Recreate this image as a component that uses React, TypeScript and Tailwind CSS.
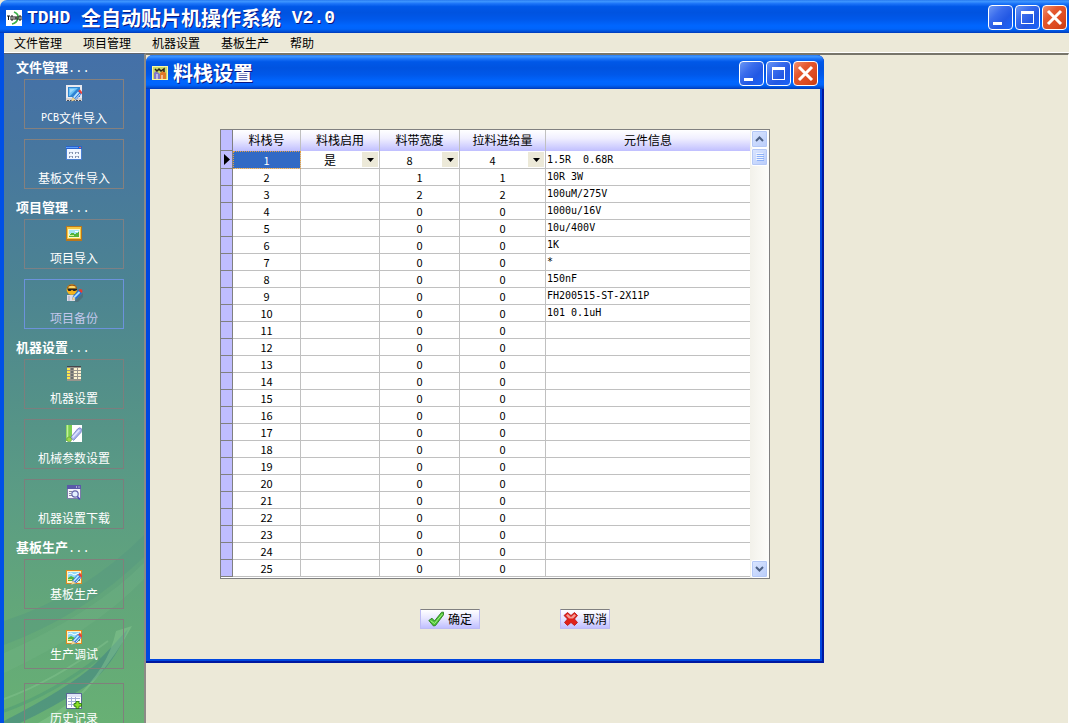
import { useState } from "react"
import type { ReactNode } from "react"
import clsx from "clsx"

interface FeederRow {
  width: string
  feed: string
  info: string
}

interface NavItem {
  label: string
  latin?: string
  icon: ReactNode
  active?: boolean
}

interface NavGroup {
  title: string
  items: NavItem[]
  border: string
  compact?: boolean
}

const MENUS = ["文件管理", "项目管理", "机器设置", "基板生产", "帮助"]

const INFO = ["", "10R 3W", "100uM/275V", "1000u/16V", "10u/400V", "1K", "*", "150nF", "FH200515-ST-2X11P", "101 0.1uH"]

const ROWS: FeederRow[] = Array.from({ length: 24 }, (_, i) => ({
  width: i < 2 ? String(i + 1) : "0",
  feed: i < 2 ? String(i + 1) : "0",
  info: INFO[i + 1] ?? "",
}))

const MONO = "font-['Liberation_Mono',monospace]"
const SMALL_MONO = "font-['DejaVu_Sans_Mono',monospace] text-[10px]"
const CAPTION =
  "bg-[linear-gradient(to_bottom,#2a7cf0_0%,#3d95ff_5%,#1c74f8_11%,#0058e8_20%,#0053e0_38%,#0058ea_58%,#0066ff_78%,#0064fb_88%,#0050d8_95%,#0038b8_100%)]"

function Pencil() {
  return (
    <>
      <path d="M5.5 16 L6.5 11.5 L12 5.5 L15.5 9 L10.5 14.6 Z" fill="#2f74d8" />
      <path d="M7.8 12.6 L12.6 7.2" stroke="#b4e8ff" strokeWidth="1.8" />
      <path d="M9.6 14 L14.2 9" stroke="#ffffff" strokeWidth="0.9" />
      <path d="M5.2 16.4 L6.6 12 L9.8 14.8 Z" fill="#f6d58c" />
      <path d="M12.2 6 L14 4.4 L16 6.8 L16 8.4 L15.2 9 Z" fill="#e8413a" />
    </>
  )
}

const icon = {
  pcb: (
    <svg viewBox="0 0 16 17" className="h-[17px] w-4">
      <rect width="16" height="14" fill="#e9e9ef" />
      <rect x="2" y="2" width="12" height="10" fill="#2f86d2" />
      <path d="M3 3 H12 L4 11 H3 Z" fill="#6cc0f6" />
      <path d="M4 4 H9 L4 8 Z" fill="#9ad8fc" />
      <rect y="13" width="16" height="3" fill="#d6d3d3" />
      <path d="M1 15.5 H15" stroke="#4a4a50" strokeDasharray="2 1" />
      <Pencil />
    </svg>
  ),
  board: (
    <svg viewBox="0 0 16 14" className="h-[14px] w-4" shapeRendering="crispEdges">
      <rect width="16" height="14" fill="#4a7fd0" />
      <rect width="16" height="3" fill="#2a62cc" />
      <rect y="1" width="12" height="1" fill="#5ca0ff" />
      <rect x="13" y="1" width="2" height="1" fill="#ef6a50" />
      <rect x="1" y="3" width="14" height="10" fill="#f1f6ff" />
      <path d="M3 6.5 H7 M9 6.5 H13 M3 10.5 H7 M9 10.5 H13" stroke="#a9b4c8" />
      <path d="M3.5 6 V8 M6.5 6 V8 M9.5 6 V8 M12.5 6 V8 M3.5 10 V12 M6.5 10 V12 M9.5 10 V12 M12.5 10 V12" stroke="#8292b0" />
    </svg>
  ),
  picture: (
    <svg viewBox="0 0 16 15" className="h-[15px] w-4" shapeRendering="crispEdges">
      <rect width="16" height="15" fill="#b8761c" />
      <rect x="1" y="1" width="14" height="12" fill="#f5c842" />
      <rect x="2" y="3" width="12" height="9" fill="#fdf6c8" />
      <rect x="3" y="4" width="10" height="4" fill="#a4e4f4" />
      <path d="M3 9 L6 7 L9 8 L13 6 V11 H3 Z" fill="#54b33c" />
      <rect x="3" y="9" width="5" height="1" fill="#d6f08c" />
      <rect x="9" y="5" width="3" height="1" fill="#fff" />
    </svg>
  ),
  backup: (
    <svg viewBox="0 0 17 18" className="h-[18px] w-[17px]">
      <path d="M8 18 L17 9 V13 L12 18 Z" fill="#50606c" opacity=".55" />
      <path d="M1 11 H9 V17 H1 Z" fill="#dcdce8" />
      <path d="M3 12 V17" stroke="#a8a8c0" />
      <circle cx="5.8" cy="5.5" r="5.2" fill="#f9b41c" />
      <path d="M1 4 Q2 0 6 .5 Q10 0 11 4 Z" fill="#9c5410" />
      <path d="M2.5 2.5 Q6 1 9.5 2.5 V4 H2.5 Z" fill="#ffd968" />
      <path d="M1 4.5 H11 V6 L9 7 H7.5 L6 5.8 L4.5 7 H2.5 Z" fill="#202028" />
      <path d="M6 16 L7 12 L13 6 L16 9 L10 15 Z" fill="#2468d8" />
      <path d="M8 13.5 L13.6 8" stroke="#a5e0ff" strokeWidth="1.8" />
      <path d="M6 16.5 L7 12.6 L9.6 15 Z" fill="#ffd88c" />
      <path d="M12.5 6 L14 5 Q17 5 16.4 8 L15.4 9 Z" fill="#e83a2e" />
    </svg>
  ),
  grid: (
    <svg viewBox="0 0 14 15" className="h-[15px] w-[14px]" shapeRendering="crispEdges">
      <rect width="14" height="15" fill="#98948c" />
      <rect width="14" height="1" fill="#45454a" />
      <path d="M1.5 2 V14" stroke="#ffe84a" strokeWidth="3" strokeDasharray="2 1" />
      <path d="M5 2 V14" stroke="#6a6e70" strokeWidth="2" strokeDasharray="2 1" />
      <path d="M8.5 2 V14 M12 2 V14" stroke="#fdf3d0" strokeWidth="3" strokeDasharray="2 1" />
      <path d="M10.5 1 V15 M6.5 1 V15" stroke="#98948c" />
    </svg>
  ),
  param: (
    <svg viewBox="0 0 16 17" className="h-[17px] w-4">
      <rect width="16" height="17" fill="#fff" />
      <path d="M0 0 H6 V12 L3 16 H0 Z" fill="#7ccf50" />
      <path d="M1.5 0 V13" stroke="#c2f09c" strokeWidth="1.5" />
      <path d="M4.6 12.6 L11.5 4 Q13.5 2 15.3 3.5 Q16 5 15 7.4 L7.6 15.4 Z" fill="#a8b4ee" stroke="#6a74b8" strokeWidth=".7" />
      <path d="M6.6 12.4 L13.4 5" stroke="#dfe4ff" strokeWidth="1.6" />
      <circle cx="3.2" cy="14.4" r="2.4" fill="#9cd84c" stroke="#5c9a2c" strokeWidth=".6" />
    </svg>
  ),
  download: (
    <svg viewBox="0 0 14 16" className="h-4 w-[14px]">
      <rect width="14" height="14" fill="#7c7ca8" />
      <rect width="14" height="4" fill="#5a5aa8" />
      <path d="M9 2 H10 M11.5 2 H12.5" stroke="#fff" />
      <rect x="1" y="4" width="12" height="9" fill="#f4f4fa" />
      <path d="M2 6.5 H5 M2 8.5 H4 M2 10.5 H5" stroke="#8888a0" />
      <circle cx="8" cy="9" r="3.2" fill="#e4f0ff" stroke="#6464a8" strokeWidth="1.2" />
      <path d="M10.4 11.6 L12.8 14.6" stroke="#4c4cb8" strokeWidth="1.6" />
    </svg>
  ),
  edit: (
    <svg viewBox="0 0 16 15" className="h-[15px] w-4">
      <rect width="16" height="14" fill="#e08a20" />
      <rect x="1" y="1" width="14" height="12" fill="#fff4c0" />
      <rect x="2" y="2" width="12" height="6" fill="#8fd8f8" />
      <path d="M2 4 L5 3 L8 5 L13 3" stroke="#fff" fill="none" />
      <path d="M2 8 L5 6 L9 8 L14 6 V11 H2 Z" fill="#55b440" />
      <path d="M2 9.5 H6" stroke="#d4f080" />
      <g transform="translate(0 -1.6)">
        <Pencil />
      </g>
    </svg>
  ),
  history: (
    <svg viewBox="0 0 16 16" className="h-4 w-4">
      <rect width="16" height="16" fill="#5a6a96" />
      <rect x="1" y="1" width="14" height="14" fill="#fff" />
      <rect x="1" y="1" width="14" height="3" fill="#dfe4f6" />
      <path d="M2 5.5 H14 M2 8.5 H14 M2 11.5 H12 M5.5 4 V14 M9.5 4 V14" stroke="#a4b0d8" />
      <path d="M10 8.5 H13 V10.5 H15.5 V13.2 H13 V15.5 H10 V13.2 H8 V10.5 H10 Z" fill="#8ce028" stroke="#2c7a14" strokeWidth=".9" />
    </svg>
  ),
}

const GROUPS: NavGroup[] = [
  {
    title: "文件管理",
    border: "border-[#85807e]",
    items: [
      { latin: "PCB", label: "文件导入", icon: icon.pcb },
      { label: "基板文件导入", icon: icon.board },
    ],
  },
  {
    title: "项目管理",
    border: "border-[#7d8084]",
    items: [
      { label: "项目导入", icon: icon.picture },
      { label: "项目备份", icon: icon.backup, active: true },
    ],
  },
  {
    title: "机器设置",
    border: "border-[#7c7e7d]",
    items: [
      { label: "机器设置", icon: icon.grid },
      { label: "机械参数设置", icon: icon.param },
      { label: "机器设置下载", icon: icon.download },
    ],
  },
  {
    title: "基板生产",
    border: "border-[#80807c]",
    compact: true,
    items: [
      { label: "基板生产", icon: icon.edit },
      { label: "生产调试", icon: icon.edit },
      { label: "历史记录", icon: icon.history },
    ],
  },
]

function WindowButtons() {
  const base = "flex size-[25px] items-center justify-center rounded-[4px] border border-white"
  const blue = "bg-[linear-gradient(135deg,#6c98f4_0%,#3a6cec_35%,#2258e4_65%,#1a64fa_100%)]"
  return (
    <div className="flex gap-[2px]">
      <button aria-label="最小化" className={clsx(base, blue)}>
        <svg viewBox="0 0 23 23" className="size-[23px]" shapeRendering="crispEdges">
          <rect x="4" y="16" width="9" height="3" fill="#fff" />
        </svg>
      </button>
      <button aria-label="最大化" className={clsx(base, blue)}>
        <svg viewBox="0 0 23 23" className="size-[23px]" shapeRendering="crispEdges">
          <path d="M5 5 H18 V18 H5 Z M6 8 V17 H17 V8 Z" fill="#fff" fillRule="evenodd" />
        </svg>
      </button>
      <button aria-label="关闭" className={clsx(base, "bg-[linear-gradient(135deg,#f09070_0%,#e4582f_35%,#dc4a20_70%,#c83c10_100%)]")}>
        <svg viewBox="0 0 23 23" className="size-[23px]">
          <path d="M5 5 L18 18 M18 5 L5 18" stroke="#fff" strokeWidth="3" />
        </svg>
      </button>
    </div>
  )
}

function Sidebar() {
  return (
    <nav className="relative w-[142px] shrink-0 overflow-hidden border-t border-r-2 border-t-[#5d6470] border-r-[#8c8a86] bg-[linear-gradient(to_bottom,#4470a8_0%,#47769f_14%,#4c8392_34%,#549188_52%,#5b9c84_66%,#62a67a_82%,#68b074_100%)]">
      <svg viewBox="0 0 140 200" preserveAspectRatio="none" className="absolute bottom-0 left-0 h-[200px] w-full">
        <path d="M0 98 Q80 72 140 12 V34 Q80 92 0 122 Z" fill="#4f9180" opacity=".3" />
        <path d="M0 130 Q90 90 140 40 V56 Q90 108 0 150 Z" fill="#7fc08c" opacity=".2" />
        <path d="M0 198 Q66 164 90 142 Q108 124 124 106 Q110 142 84 162 Q50 184 16 200 H0 Z" fill="#3f8384" opacity=".55" />
        <path d="M48 200 Q98 158 128 103 L112 108 Q104 146 70 176 Q52 190 34 200 Z" fill="#8fcf96" opacity=".4" />
        <path d="M0 176 Q50 158 104 118" stroke="#8ac893" strokeWidth="2" fill="none" opacity=".4" />
        <path d="M0 188 Q50 170 96 134" stroke="#4d9a76" strokeWidth="3" fill="none" opacity=".5" />
      </svg>
      <div className="relative pt-[5px]">
        {GROUPS.map((group) => (
          <section key={group.title} className="mb-[10px] flex flex-col">
            <h2 className="h-5 pl-3 text-[13px] leading-4 font-bold text-white">
              {group.title}
              <span className={clsx(MONO, "text-[12px] font-normal")}>...</span>
            </h2>
            <div className="flex flex-col gap-[10px] px-5">
              {group.items.map((item) => (
                <button
                  key={item.label}
                  className={clsx(
                    "flex h-[50px] flex-col items-center border text-[12px] leading-4",
                    group.compact ? "pt-2 last:mt-1" : "gap-2 pt-1",
                    item.active ? "border-[#6c92dc] text-[#c3c8ec]" : [group.border, "text-white"],
                  )}
                >
                  <span className="flex h-[18px] items-center">{item.icon}</span>
                  <span className="flex items-center">
                    {item.latin && <span className={SMALL_MONO}>{item.latin}</span>}
                    {item.label}
                  </span>
                </button>
              ))}
            </div>
          </section>
        ))}
      </div>
    </nav>
  )
}

function CellSelect({ label, value, options }: { label: string; value: string; options: string[] }) {
  const [current, setCurrent] = useState(value)
  return (
    <div className="relative flex h-[17px]">
      <select
        aria-label={label}
        value={current}
        onChange={(e) => setCurrent(e.target.value)}
        className="w-full appearance-none bg-white pr-[20px] [text-align-last:center] outline-none"
      >
        {options.map((o) => (
          <option key={o}>{o}</option>
        ))}
      </select>
      <span className="pointer-events-none absolute inset-y-[1px] right-[1px] flex w-4 items-center justify-center bg-[#ece9d8]">
        <svg viewBox="0 0 7 4" className="h-1 w-[7px]">
          <path d="M0 0 H7 L3.5 4 Z" fill="#000" />
        </svg>
      </span>
    </div>
  )
}

function ScrollBar() {
  const part = "flex h-[18px] w-full items-center justify-center rounded-[2px] border border-white bg-[linear-gradient(135deg,#dbe6ff,#b8ccfa)] shadow-[inset_0_0_0_1px_#b4c8f6]"
  return (
    <div className="flex w-[19px] shrink-0 flex-col bg-[linear-gradient(to_right,#f2f1ea,#fdfdfa)] px-px">
      <button aria-label="向上滚动" className={part}>
        <svg viewBox="0 0 9 6" className="h-[6px] w-[9px]">
          <path d="M1 5 L4.5 1.5 L8 5" stroke="#4d6185" strokeWidth="2" fill="none" />
        </svg>
      </button>
      <div className={part}>
        <svg viewBox="0 0 8 8" className="size-2" shapeRendering="crispEdges">
          <path d="M0 .5 H7 M0 2.5 H7 M0 4.5 H7 M0 6.5 H7" stroke="#eef4ff" />
          <path d="M1 1.5 H8 M1 3.5 H8 M1 5.5 H8 M1 7.5 H8" stroke="#8cb0f8" />
        </svg>
      </div>
      <div className="flex-1" />
      <button aria-label="向下滚动" className={part}>
        <svg viewBox="0 0 9 6" className="h-[6px] w-[9px]">
          <path d="M1 1 L4.5 4.5 L8 1" stroke="#4d6185" strokeWidth="2" fill="none" />
        </svg>
      </button>
    </div>
  )
}

function FeederTable() {
  const th = "h-[21px] border-r border-[#c0c0c0] bg-[linear-gradient(to_bottom,#ffffff,#f0efff_40%,#c0bfff)] p-0 pb-[2px] text-[12px] leading-4 font-normal"
  const td = "border-r border-b border-[#c0c0c0] p-0 text-center"
  const head = "border-r border-b border-[#808080] bg-[#bfbdff] p-0"
  const info = clsx(SMALL_MONO, "border-b border-[#c0c0c0] p-0 pl-px text-left whitespace-pre")
  return (
    <div className="flex border border-[#808080] bg-white">
      <table className="mb-px w-full table-fixed border-separate border-spacing-0 text-[11px] leading-4">
        <colgroup>
          <col className="w-3" />
          <col className="w-[68px]" />
          <col className="w-[79px]" />
          <col className="w-[80px]" />
          <col className="w-[86px]" />
          <col />
        </colgroup>
        <thead>
          <tr>
            <td className={head} />
            <th className={th}>料栈号</th>
            <th className={th}>料栈启用</th>
            <th className={th}>料带宽度</th>
            <th className={th}>拉料进给量</th>
            <th className={clsx(th, "border-r-0")}>元件信息</th>
          </tr>
        </thead>
        <tbody>
          <tr className="h-[18px]">
            <td className={head}>
              <svg viewBox="0 0 11 17" className="block h-[17px] w-[11px]">
                <path d="M3 3 L9 8.5 L3 14 Z" fill="#000" />
              </svg>
            </td>
            <td className={clsx(td, "bg-[#316ac5] text-white outline-1 -outline-offset-1 outline-dotted outline-[#e8a040]")}>1</td>
            <td className={clsx(td, "text-[12px]")}>
              <CellSelect label="料栈启用" value="是" options={["是", "否"]} />
            </td>
            <td className={td}>
              <CellSelect label="料带宽度" value="8" options={["8", "12", "16"]} />
            </td>
            <td className={td}>
              <CellSelect label="拉料进给量" value="4" options={["2", "4", "8"]} />
            </td>
            <td className={info}>{"1.5R  0.68R"}</td>
          </tr>
          {ROWS.map((row, i) => (
            <tr key={i} className="h-[17px]">
              <td className={head} />
              <td className={td}>{i + 2}</td>
              <td className={td} />
              <td className={td}>{row.width}</td>
              <td className={td}>{row.feed}</td>
              <td className={info}>{row.info}</td>
            </tr>
          ))}
        </tbody>
      </table>
      <ScrollBar />
    </div>
  )
}

function FeederDialog() {
  const btn = "flex h-5 items-center justify-center border border-[#bdbbf4] border-t-[#808080] bg-[linear-gradient(to_bottom,#ffffff,#e8e7ff_45%,#c0bfff)] text-[12px] leading-4"
  return (
    <section className="w-[678px] rounded-t-[7px] bg-[#0047e0] shadow-[inset_-1px_-1px_0_1px_#0018a0]">
      <header className={clsx(CAPTION, "flex h-[34px] items-center justify-between rounded-t-[7px] px-[6px] pt-[2px]")}>
        <h2 className="flex items-center gap-[5px] text-[20px] leading-6 font-bold text-white [text-shadow:1px_1px_0_#0a1883]">
          <svg viewBox="0 0 16 14" className="h-[14px] w-4">
            <rect width="16" height="14" fill="#fbf6a0" />
            <rect x="1" y="1" width="14" height="12" fill="#c8d868" />
            <path d="M2 13 V7 L4 5 L8 8 V13 Z" fill="#8078c8" />
            <path d="M8 13 V7 L11 5 L14 7 V13 Z" fill="#e07828" />
            <path d="M3 3 L5 5 L7 3 L9 5 L12 3 V6" stroke="#282018" strokeWidth="1.5" fill="none" />
            <path d="M5 8 V13 M10 9 V13" stroke="#fff" />
          </svg>
          料栈设置
        </h2>
        <WindowButtons />
      </header>
      <div className="mx-1 bg-[#ece9d8] pt-10 pr-[50px] pb-[30px] pl-[70px]">
        <FeederTable />
        <div className="mt-[30px] flex justify-center gap-20 pl-10">
          <button className={clsx(btn, "w-[60px] gap-1")}>
            <svg viewBox="0 0 16 16" className="size-4">
              <path d="M.8 9.5 L4 7.2 L6.5 10 L13.6 1.2 L15.6 1.2 L15.4 4 L7.5 14.5 L5.5 15 Z" fill="#4cc434" stroke="#2a7a20" strokeWidth=".9" />
              <path d="M2.5 9.6 L6.5 12.5 L14.4 3" stroke="#a8f08c" strokeWidth="1" fill="none" />
            </svg>
            确定
          </button>
          <button className={clsx(btn, "w-[50px] gap-1")}>
            <svg viewBox="0 0 16 16" className="size-4">
              <path d="M1 4.5 L4.5 1.5 L8 4.5 L11.5 1.5 L14.5 4.5 L11.5 8 L14.5 11.5 L11.5 14.5 L8 11.5 L4.5 14.5 L1.5 11.5 L4.5 8 Z" fill="#e02018" stroke="#b81010" strokeWidth=".8" />
              <path d="M3 4.5 L4.8 3 L8 6 L11.3 3 L13 4.6 L10 7.4 H6 Z" fill="#f49a94" />
            </svg>
            取消
          </button>
        </div>
      </div>
      <div className="h-1" />
    </section>
  )
}

export default function App() {
  return (
    <div className="flex h-screen flex-col overflow-hidden bg-[#ece9d8] font-['Noto_Sans_CJK_SC',sans-serif] text-black">
      <header className={clsx(CAPTION, "flex h-[33px] shrink-0 items-center justify-between rounded-tl-[7px] pt-[2px] pr-[2px] pl-[6px]")}>
        <h1 className="flex items-center gap-[5px] text-[20px] leading-6 font-bold whitespace-pre text-white [text-shadow:1px_1px_0_#0a1883]">
          <svg viewBox="0 0 16 16" className="size-4">
            <rect width="16" height="16" fill="#fff" />
            <path d="M8 2 Q13 4 12 8 Q11 13 6 14" stroke="#3cb04a" strokeWidth="1.5" fill="none" />
            <path d="M1 6 H4 M2.5 6 V10 M5 6 V10 H7 V6 Z M9 6 V10 M9 8 H11 M11 6 V10 M13 6 V10 H15 V6 Z" stroke="#111" fill="none" />
          </svg>
          <span className="flex items-center">
            <span className={clsx(MONO, "text-[18px]")}>{"TDHD "}</span>
            全自动贴片机操作系统
            <span className={clsx(MONO, "text-[18px]")}>{" V2.0"}</span>
          </span>
        </h1>
        <WindowButtons />
      </header>
      <div className="flex min-h-0 flex-1 flex-col border-l-4 border-[#0050e6]">
        <div role="menubar" className="flex h-5 shrink-0 items-center gap-[21px] border-b border-white pl-[10px] text-[12px] leading-4">
          {MENUS.map((m) => (
            <button key={m} role="menuitem">
              {m}
            </button>
          ))}
        </div>
        <div className="flex min-h-0 flex-1">
          <Sidebar />
          <main className="min-w-0 flex-1 overflow-hidden border-t-2 border-r border-t-[#77756a] border-r-white">
            <FeederDialog />
          </main>
        </div>
      </div>
    </div>
  )
}
